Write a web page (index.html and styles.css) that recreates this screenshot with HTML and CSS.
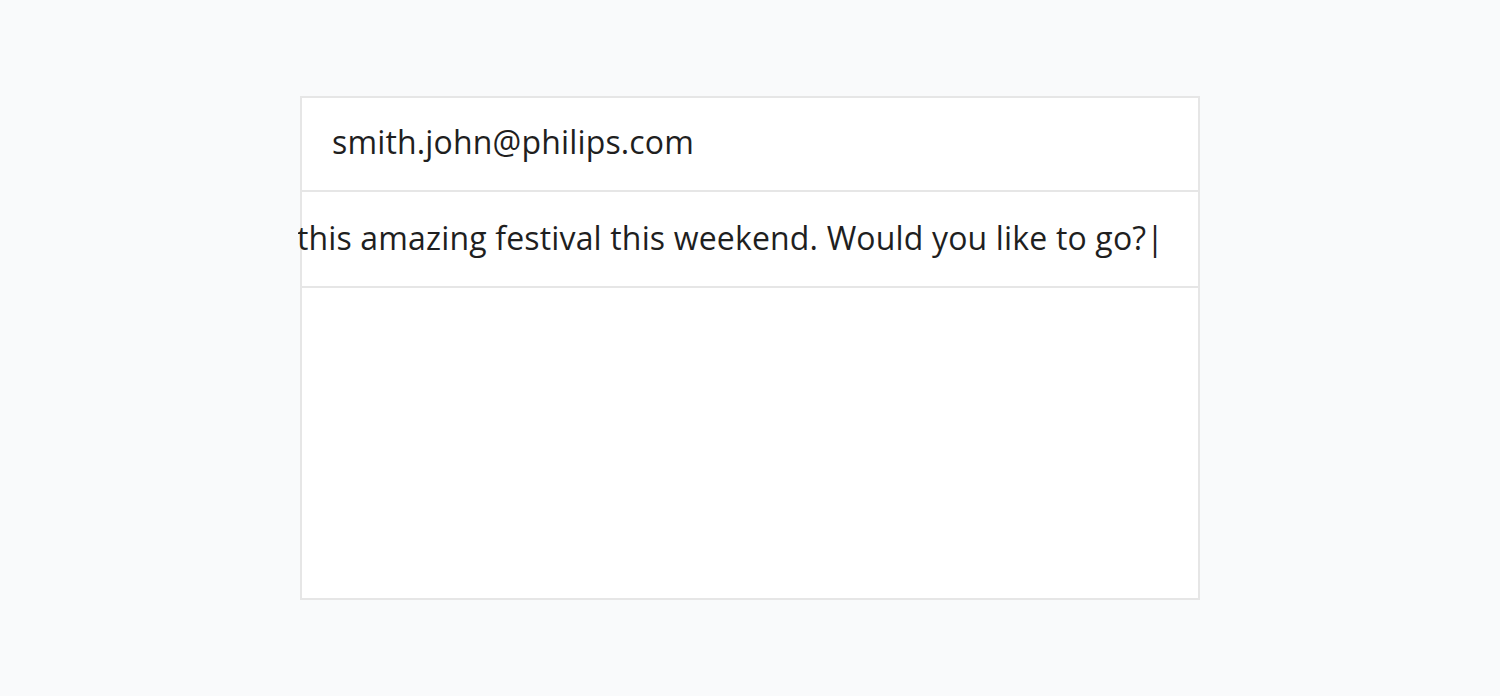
FILE: index.html
```html
<!DOCTYPE html>
<html lang="en">
<head>
<meta charset="utf-8">
<title>Compose</title>
<link rel="stylesheet" href="styles.css">
</head>
<body>
  <main class="page">
    <section class="card">
      <div class="row row-to">
        <span class="field-text">smith.john@philips.com</span>
      </div>
      <div class="row row-subject">
        <div class="scroller">
          <span class="field-text">this amazing festival this weekend. Would you like to go?|</span>
        </div>
      </div>
      <div class="body-area"></div>
    </section>
  </main>
</body>
</html>
```

FILE: styles.css
```css
html, body {
  margin: 0;
  padding: 0;
  background: #f9fafb;
}

body {
  font-family: "Open Sans", Lato, sans-serif;
  color: #1f1f1f;
}

.page {
  height: 696px;
  padding-top: 96px;
  box-sizing: border-box;
  display: flex;
  justify-content: center;
}

.card {
  width: 900px;
  height: 504px;
  box-sizing: border-box;
  background: #ffffff;
  border: 2px solid #e6e6e6;
  display: flex;
  flex-direction: column;
}

.row {
  display: flex;
  align-items: center;
  border-bottom: 2px solid #e6e6e6;
  flex-shrink: 0;
}

.row-to {
  height: 94px;
  box-sizing: border-box;
  padding-left: 30px;
  padding-bottom: 4px;
}

.row-subject {
  height: 96px;
  box-sizing: border-box;
  padding-right: 34px;
  padding-bottom: 2px;
}

.scroller {
  flex: 1;
  margin-left: -4px;
  display: flex;
  justify-content: flex-end;
  overflow: hidden;
}

.field-text {
  font-size: 32px;
  line-height: 40px;
  letter-spacing: 0.16px;
  white-space: nowrap;
  flex-shrink: 0;
}

.body-area {
  flex: 1;
}
```
